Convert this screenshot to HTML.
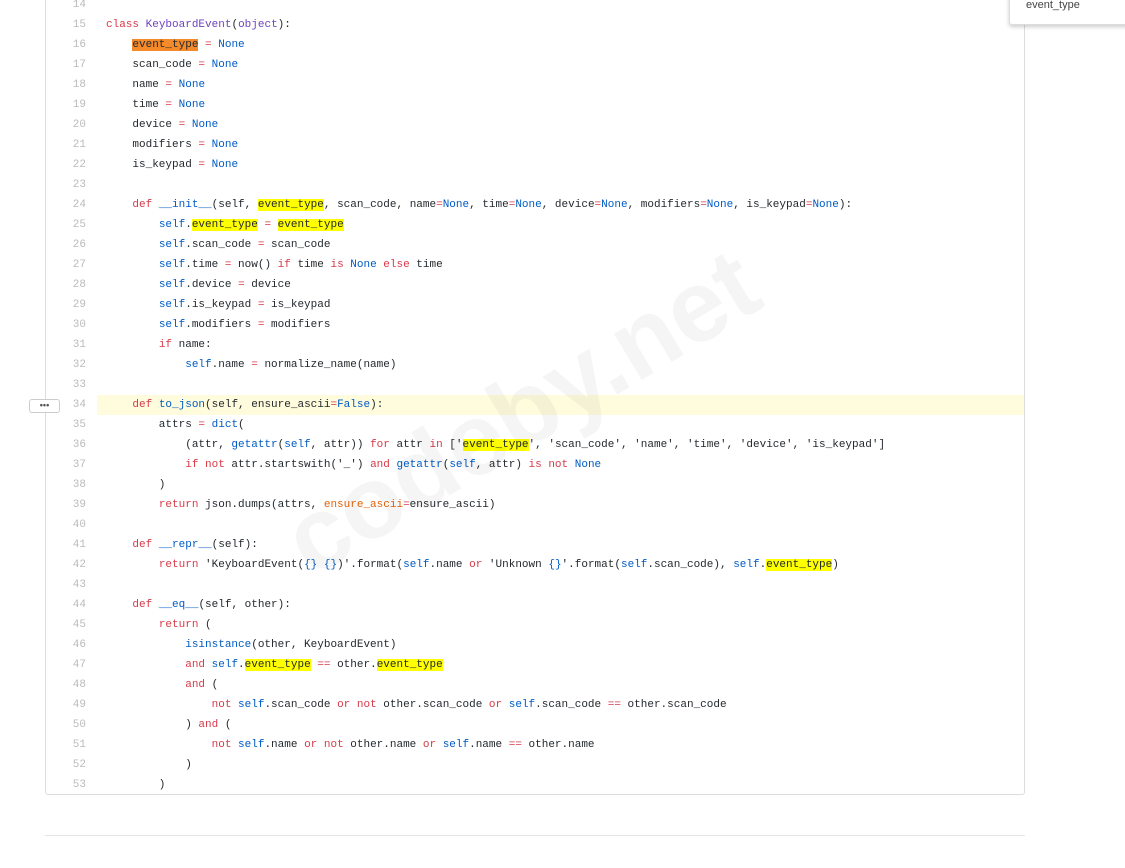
<!DOCTYPE html>
<html><head><meta charset="utf-8"><style>
body{margin:0;width:1125px;height:868px;background:#fff;overflow:hidden;position:relative;font-family:"Liberation Mono",monospace;}
.box{position:absolute;left:45px;top:-30px;width:978px;height:823px;border:1px solid #ddd;border-radius:0 0 3px 3px;}
.code{position:absolute;left:0;top:-5px;width:1125px;font-size:11px;}
.r{position:relative;height:20px;line-height:20px;white-space:pre;color:#24292e;}
.ln{position:absolute;left:46px;width:40px;text-align:right;color:#bbb;}
.t{position:absolute;left:106px;}
.hl{background:#fffbdd;position:absolute;left:97px;width:927px;height:20px;top:0}
.k{color:#d73a49}.n{color:#005cc5}.c{color:#6f42c1}.a{color:#e36209}.s{color:#24292e}
.h{background:#ffff00}.ho{background:#f48a2a}
.dots{position:absolute;left:29px;top:4px;width:29px;height:12px;border:1px solid #ccc;border-radius:3px;background:#fff;font-size:9px;line-height:10px;text-align:center;color:#555;font-family:"Liberation Sans",sans-serif;font-weight:bold}
.wm{position:absolute;left:320px;top:490px;font:bold 102px "Liberation Sans",sans-serif;color:rgba(0,0,0,0.04);transform:rotate(-31deg);transform-origin:left bottom;white-space:nowrap;line-height:102px;}
.pop{position:absolute;left:1009px;top:-20px;width:130px;height:43px;background:#fff;border:1px solid #ddd;box-shadow:0 2px 4px rgba(0,0,0,.2);border-radius:3px}
.pop span{position:absolute;left:16px;top:18px;font:11px "Liberation Sans",sans-serif;color:#444}
.sep{position:absolute;left:45px;top:835px;width:980px;height:1px;background:#e5e5e5}
</style></head><body>
<div class="box"></div>
<div class="code">
<div class="r"><span class="ln">14</span></div>
<div class="r"><span class="ln">15</span><span class="t"><span class="k">class</span> <span class="c">KeyboardEvent</span>(<span class="c">object</span>):</span></div>
<div class="r"><span class="ln">16</span><span class="t">    <span class="ho">event_type</span> <span class="k">=</span> <span class="n">None</span></span></div>
<div class="r"><span class="ln">17</span><span class="t">    scan_code <span class="k">=</span> <span class="n">None</span></span></div>
<div class="r"><span class="ln">18</span><span class="t">    name <span class="k">=</span> <span class="n">None</span></span></div>
<div class="r"><span class="ln">19</span><span class="t">    time <span class="k">=</span> <span class="n">None</span></span></div>
<div class="r"><span class="ln">20</span><span class="t">    device <span class="k">=</span> <span class="n">None</span></span></div>
<div class="r"><span class="ln">21</span><span class="t">    modifiers <span class="k">=</span> <span class="n">None</span></span></div>
<div class="r"><span class="ln">22</span><span class="t">    is_keypad <span class="k">=</span> <span class="n">None</span></span></div>
<div class="r"><span class="ln">23</span></div>
<div class="r"><span class="ln">24</span><span class="t">    <span class="k">def</span> <span class="n">__init__</span>(self, <span class="h">event_type</span>, scan_code, name<span class="k">=</span><span class="n">None</span>, time<span class="k">=</span><span class="n">None</span>, device<span class="k">=</span><span class="n">None</span>, modifiers<span class="k">=</span><span class="n">None</span>, is_keypad<span class="k">=</span><span class="n">None</span>):</span></div>
<div class="r"><span class="ln">25</span><span class="t">        <span class="n">self</span>.<span class="h">event_type</span> <span class="k">=</span> <span class="h">event_type</span></span></div>
<div class="r"><span class="ln">26</span><span class="t">        <span class="n">self</span>.scan_code <span class="k">=</span> scan_code</span></div>
<div class="r"><span class="ln">27</span><span class="t">        <span class="n">self</span>.time <span class="k">=</span> now() <span class="k">if</span> time <span class="k">is</span> <span class="n">None</span> <span class="k">else</span> time</span></div>
<div class="r"><span class="ln">28</span><span class="t">        <span class="n">self</span>.device <span class="k">=</span> device</span></div>
<div class="r"><span class="ln">29</span><span class="t">        <span class="n">self</span>.is_keypad <span class="k">=</span> is_keypad</span></div>
<div class="r"><span class="ln">30</span><span class="t">        <span class="n">self</span>.modifiers <span class="k">=</span> modifiers</span></div>
<div class="r"><span class="ln">31</span><span class="t">        <span class="k">if</span> name:</span></div>
<div class="r"><span class="ln">32</span><span class="t">            <span class="n">self</span>.name <span class="k">=</span> normalize_name(name)</span></div>
<div class="r"><span class="ln">33</span></div>
<div class="r"><div class="hl"></div><div class="dots">•••</div><span class="ln">34</span><span class="t">    <span class="k">def</span> <span class="n">to_json</span>(self, ensure_ascii<span class="k">=</span><span class="n">False</span>):</span></div>
<div class="r"><span class="ln">35</span><span class="t">        attrs <span class="k">=</span> <span class="n">dict</span>(</span></div>
<div class="r"><span class="ln">36</span><span class="t">            (attr, <span class="n">getattr</span>(<span class="n">self</span>, attr)) <span class="k">for</span> attr <span class="k">in</span> [<span class="s">'<span class="h">event_type</span>'</span>, <span class="s">'scan_code'</span>, <span class="s">'name'</span>, <span class="s">'time'</span>, <span class="s">'device'</span>, <span class="s">'is_keypad'</span>]</span></div>
<div class="r"><span class="ln">37</span><span class="t">            <span class="k">if not</span> attr.startswith(<span class="s">'_'</span>) <span class="k">and</span> <span class="n">getattr</span>(<span class="n">self</span>, attr) <span class="k">is not</span> <span class="n">None</span></span></div>
<div class="r"><span class="ln">38</span><span class="t">        )</span></div>
<div class="r"><span class="ln">39</span><span class="t">        <span class="k">return</span> json.dumps(attrs, <span class="a">ensure_ascii</span><span class="k">=</span>ensure_ascii)</span></div>
<div class="r"><span class="ln">40</span></div>
<div class="r"><span class="ln">41</span><span class="t">    <span class="k">def</span> <span class="n">__repr__</span>(self):</span></div>
<div class="r"><span class="ln">42</span><span class="t">        <span class="k">return</span> <span class="s">'KeyboardEvent(<span class="n">{}</span> <span class="n">{}</span>)'</span>.format(<span class="n">self</span>.name <span class="k">or</span> <span class="s">'Unknown <span class="n">{}</span>'</span>.format(<span class="n">self</span>.scan_code), <span class="n">self</span>.<span class="h">event_type</span>)</span></div>
<div class="r"><span class="ln">43</span></div>
<div class="r"><span class="ln">44</span><span class="t">    <span class="k">def</span> <span class="n">__eq__</span>(self, other):</span></div>
<div class="r"><span class="ln">45</span><span class="t">        <span class="k">return</span> (</span></div>
<div class="r"><span class="ln">46</span><span class="t">            <span class="n">isinstance</span>(other, KeyboardEvent)</span></div>
<div class="r"><span class="ln">47</span><span class="t">            <span class="k">and</span> <span class="n">self</span>.<span class="h">event_type</span> <span class="k">==</span> other.<span class="h">event_type</span></span></div>
<div class="r"><span class="ln">48</span><span class="t">            <span class="k">and</span> (</span></div>
<div class="r"><span class="ln">49</span><span class="t">                <span class="k">not</span> <span class="n">self</span>.scan_code <span class="k">or not</span> other.scan_code <span class="k">or</span> <span class="n">self</span>.scan_code <span class="k">==</span> other.scan_code</span></div>
<div class="r"><span class="ln">50</span><span class="t">            ) <span class="k">and</span> (</span></div>
<div class="r"><span class="ln">51</span><span class="t">                <span class="k">not</span> <span class="n">self</span>.name <span class="k">or not</span> other.name <span class="k">or</span> <span class="n">self</span>.name <span class="k">==</span> other.name</span></div>
<div class="r"><span class="ln">52</span><span class="t">            )</span></div>
<div class="r"><span class="ln">53</span><span class="t">        )</span></div>
</div>
<div class="wm">codeby.net</div>
<div class="pop"><span>event_type</span></div>
<div class="sep"></div>
</body></html>
